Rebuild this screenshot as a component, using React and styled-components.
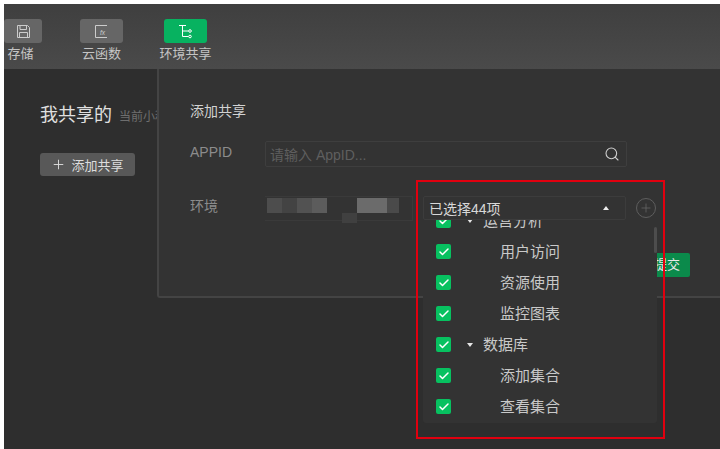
import React from 'react';
import styled, { createGlobalStyle } from 'styled-components';
import { Search, Plus, Check } from 'lucide-react';

const GlobalStyle = createGlobalStyle`
  html, body {
    margin: 0;
    padding: 0;
    background: #fff;
    overflow: hidden;
  }
  body {
    font-family: "Liberation Sans", "Noto Sans CJK SC", sans-serif;
  }
`;

const Page = styled.div`
  width: 720px;
  height: 449px;
  padding: 4px 0 0 4px;
  box-sizing: border-box;
  position: relative;
  overflow: hidden;
`;

const Window = styled.div`
  height: 445px;
  background: #2e2e2e;
  display: flex;
  flex-direction: column;
  position: relative;
`;

const Toolbar = styled.div`
  height: 65px;
  flex: none;
  background: linear-gradient(#3f3f3f, #4a4a4a);
  display: flex;
  align-items: flex-start;
  padding-top: 15px;
  box-sizing: border-box;
`;

const Tool = styled.div`
  width: ${(p) => p.$w}px;
  margin-left: ${(p) => p.$ml}px;
  display: flex;
  flex-direction: column;
  align-items: center;
  gap: 3px;
  flex: none;
`;

const ToolIcon = styled.div`
  width: ${(p) => p.$w || 43}px;
  height: 24px;
  border-radius: 3px;
  background: ${(p) => (p.$active ? '#07b260' : '#666')};
  color: ${(p) => (p.$active ? '#fff' : '#ccc')};
  display: flex;
  align-items: center;
  justify-content: center;
`;

const ToolLabel = styled.div`
  font-size: 13px;
  line-height: 16px;
  color: #c4c4c4;
  white-space: nowrap;
  margin-right: ${(p) => p.$nudge || 0}px;
`;

const Body = styled.div`
  flex: 1;
  padding: 34px 0 0 36px;
`;

const Heading = styled.div`
  display: flex;
  align-items: baseline;
  gap: 7px;
  white-space: nowrap;
`;

const HeadingTitle = styled.span`
  font-size: 18px;
  line-height: 24px;
  color: #e0e0e0;
`;

const HeadingNote = styled.span`
  font-size: 12px;
  color: #6e6e6e;
`;

const AddShare = styled.div`
  margin-top: 26px;
  width: 95px;
  height: 23px;
  border-radius: 3px;
  background: #585858;
  color: #ddd;
  font-size: 13px;
  display: flex;
  align-items: center;
  justify-content: center;
  gap: 5px;
`;

const Modal = styled.div`
  position: absolute;
  left: 153px;
  top: 65px;
  right: 0;
  height: 229px;
  background: #333;
  border-left: 2px solid #444;
  border-bottom: 2px solid #444;
  border-bottom-left-radius: 3px;
  box-sizing: border-box;
  padding: 33px 0 0 31px;
`;

const ModalTitle = styled.div`
  font-size: 14px;
  line-height: 18px;
  color: #d2d2d2;
`;

const FormRow = styled.div`
  display: flex;
  align-items: center;
  margin-top: ${(p) => p.$mt}px;
`;

const FormLabel = styled.div`
  width: 75px;
  flex: none;
  font-size: 14px;
  color: #8c8c8c;
  margin-bottom: ${(p) => p.$lift}px;
`;

const SearchInput = styled.div`
  width: 362px;
  height: 26px;
  box-sizing: border-box;
  border: 1px solid #3e3e3e;
  border-radius: 2px;
  padding: 0 6px 0 4px;
  display: flex;
  align-items: center;
  justify-content: space-between;
  font-size: 14px;
  color: #5f5f5f;
  svg {
    color: #d0d0d0;
  }
`;

const EnvSelect = styled.div`
  width: 148px;
  height: 25px;
  box-sizing: border-box;
  border: 1px solid #3a3a3a;
  border-left: 0;
  padding: 1px 0 0 2px;
  display: flex;
  align-items: flex-start;
  flex: none;
`;

const Blur = styled.div`
  width: ${(p) => p.$w}px;
  height: 15px;
  flex: none;
  background: ${(p) => p.$c};
`;

const BlurLow = styled(Blur)`
  height: 10px;
  margin-top: 15px;
`;

const Picker = styled.div`
  width: 203px;
  height: 24px;
  margin-left: 10px;
  box-sizing: border-box;
  border: 1px solid #3c3c3c;
  border-radius: 2px;
  display: flex;
  align-items: center;
  justify-content: space-between;
  padding: 0 16px 0 5px;
  font-size: 14px;
  color: #d8d8d8;
  flex: none;
`;

const UpArrow = styled.span`
  width: 0;
  height: 0;
  border-left: 3px solid transparent;
  border-right: 3px solid transparent;
  border-bottom: 4px solid #eee;
`;

const AddCircle = styled.div`
  width: 20px;
  height: 20px;
  margin-left: 10px;
  box-sizing: border-box;
  border: 1px solid #5e5e5e;
  border-radius: 50%;
  color: #6c6c6c;
  display: flex;
  align-items: center;
  justify-content: center;
  flex: none;
`;

const Submit = styled.div`
  position: absolute;
  left: 648px;
  top: 249px;
  width: 38px;
  height: 24px;
  border-radius: 2px;
  background: #0b8a4b;
  color: #e8e8e8;
  font-size: 13px;
  line-height: 24px;
  text-align: right;
  padding-right: 10px;
  box-sizing: border-box;
`;

const Dropdown = styled.div`
  position: absolute;
  left: 419px;
  top: 216px;
  width: 234px;
  height: 203px;
  background: #333;
  border-radius: 0 0 3px 3px;
  overflow: hidden;
`;

const TreeList = styled.div`
  margin-top: -15px;
  display: flex;
  flex-direction: column;
`;

const TreeRow = styled.div`
  height: 31px;
  display: flex;
  align-items: center;
  padding-left: 13px;
`;

const CheckBox = styled.div`
  width: 15px;
  height: 15px;
  flex: none;
  border-radius: 2px;
  background: #07c160;
  color: #fff;
  display: flex;
  align-items: center;
  justify-content: center;
`;

const Caret = styled.span`
  width: 0;
  height: 0;
  margin-left: 16px;
  margin-right: 10px;
  border-left: 3px solid transparent;
  border-right: 3px solid transparent;
  border-top: 4px solid #e6e6e6;
  flex: none;
`;

const TreeText = styled.span`
  font-size: 15px;
  color: #c9c9c9;
  margin-left: ${(p) => (p.$child ? 49 : 0)}px;
  margin-bottom: 2px;
`;

const ScrollThumb = styled.div`
  position: absolute;
  right: 0;
  top: 7px;
  width: 3px;
  height: 26px;
  border-radius: 2px;
  background: #4d4d4d;
`;

const RedFrame = styled.div`
  position: absolute;
  left: 416px;
  top: 180px;
  width: 249px;
  height: 259px;
  box-sizing: border-box;
  border: 2px solid #e1000f;
  pointer-events: none;
`;

const SaveIcon = () => (
  <svg width="15" height="15" viewBox="0 0 15 15" fill="none" stroke="currentColor" strokeWidth="1">
    <path d="M1.5 1.5H11.5L13.5 3.5V13.5H1.5Z" />
    <path d="M4 1.5V5.5H10.5V1.5M3.5 13.5V8.5H11.5V13.5" />
  </svg>
);

const FxIcon = () => (
  <svg width="15" height="15" viewBox="0 0 15 15" fill="none" stroke="currentColor">
    <path d="M13 1.5H1.5V13.5H13" strokeWidth="1" />
    <text x="6" y="10.5" fontSize="6.5" fontStyle="italic" fill="currentColor" stroke="none">fx</text>
  </svg>
);

const TreeIcon = () => (
  <svg width="15" height="15" viewBox="0 0 15 15" fill="none" stroke="currentColor" strokeWidth="1">
    <path d="M1 1.5H8M4.5 1.5V12.5H10.5M4.5 7H10.5" />
    <circle cx="12" cy="7" r="1.3" />
    <circle cx="12" cy="12.5" r="1.3" />
  </svg>
);

const rows = [
  { text: '运营分析', parent: true },
  { text: '用户访问' },
  { text: '资源使用' },
  { text: '监控图表' },
  { text: '数据库', parent: true },
  { text: '添加集合' },
  { text: '查看集合' },
];

const blurs = [
  [15, '#4d4d4d'],
  [15, '#434343'],
  [15, '#525252'],
  [15, '#5c5c5c'],
];

const blurs2 = [
  [30, '#6b6b6b'],
  [12, '#4a4a4a'],
];

const App = () => {
  return (
    <Page>
      <GlobalStyle />
      <Window>
        <Toolbar>
          <Tool $w={38} $ml={0}>
            <ToolIcon $w={38}><SaveIcon /></ToolIcon>
            <ToolLabel $nudge={5}>存储</ToolLabel>
          </Tool>
          <Tool $w={43} $ml={38}>
            <ToolIcon><FxIcon /></ToolIcon>
            <ToolLabel>云函数</ToolLabel>
          </Tool>
          <Tool $w={43} $ml={41}>
            <ToolIcon $active><TreeIcon /></ToolIcon>
            <ToolLabel>环境共享</ToolLabel>
          </Tool>
        </Toolbar>
        <Body>
          <Heading>
            <HeadingTitle>我共享的</HeadingTitle>
            <HeadingNote>当前小程序</HeadingNote>
          </Heading>
          <AddShare>
            <Plus size={15} strokeWidth={1.5} />
            添加共享
          </AddShare>
        </Body>
        <Modal>
          <ModalTitle>添加共享</ModalTitle>
          <FormRow $mt={21}>
            <FormLabel $lift={4}>APPID</FormLabel>
            <SearchInput>
              请输入 AppID...
              <Search size={16} strokeWidth={1.6} />
            </SearchInput>
          </FormRow>
          <FormRow $mt={28}>
            <FormLabel $lift={6}>环境</FormLabel>
            <EnvSelect>
              {blurs.map(([w, c], i) => <Blur key={i} $w={w} $c={c} />)}
              <Blur $w={15} $c="transparent" />
              <BlurLow $w={15} $c="#404040" />
              {blurs2.map(([w, c], i) => <Blur key={i} $w={w} $c={c} />)}
            </EnvSelect>
            <Picker>
              已选择44项
              <UpArrow />
            </Picker>
            <AddCircle><Plus size={14} strokeWidth={1.2} /></AddCircle>
          </FormRow>
        </Modal>
        <Submit>提交</Submit>
        <Dropdown>
          <TreeList>
            {rows.map((r) => (
              <TreeRow key={r.text}>
                <CheckBox><Check size={12} strokeWidth={3} /></CheckBox>
                {r.parent && <Caret />}
                <TreeText $child={!r.parent}>{r.text}</TreeText>
              </TreeRow>
            ))}
          </TreeList>
          <ScrollThumb />
        </Dropdown>
      </Window>
      <RedFrame />
    </Page>
  );
};

export default App;
